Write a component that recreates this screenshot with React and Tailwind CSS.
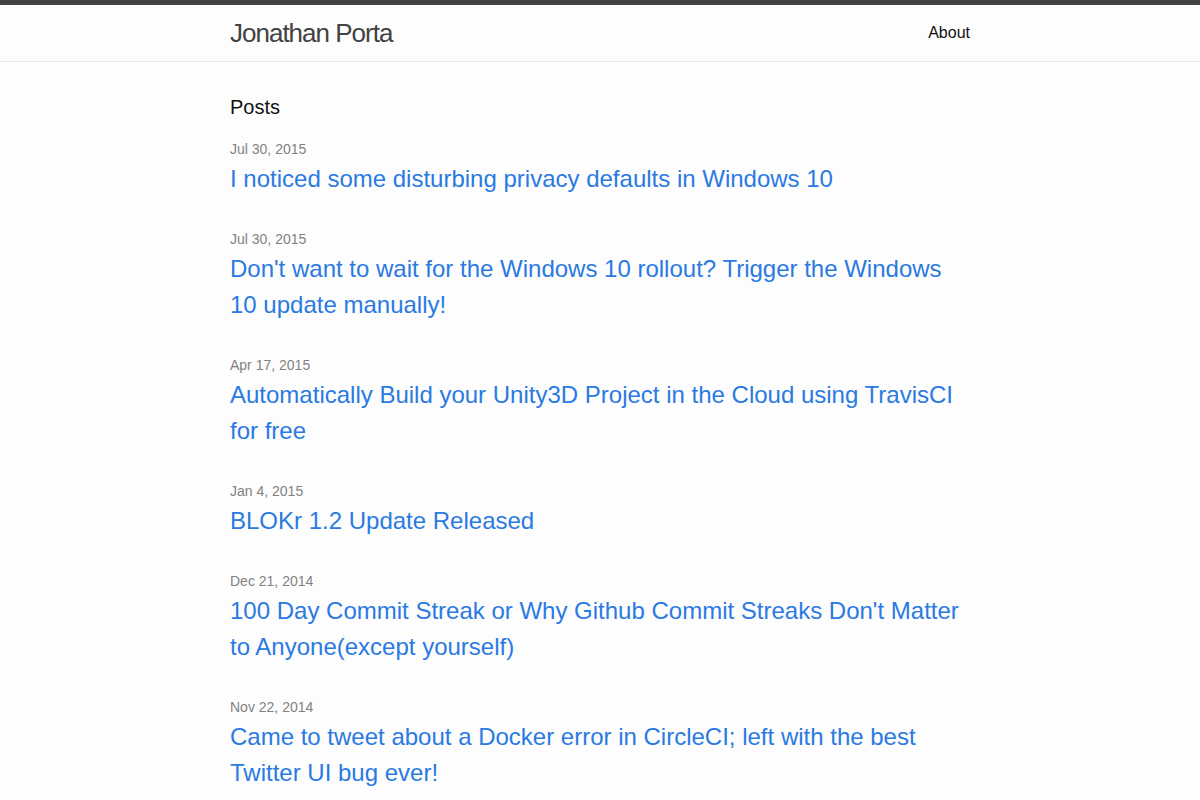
const posts = [
  { date: 'Jul 30, 2015', title: 'I noticed some disturbing privacy defaults in Windows 10' },
  { date: 'Jul 30, 2015', title: "Don't want to wait for the Windows 10 rollout? Trigger the Windows 10 update manually!" },
  { date: 'Apr 17, 2015', title: 'Automatically Build your Unity3D Project in the Cloud using TravisCI for free' },
  { date: 'Jan 4, 2015', title: 'BLOKr 1.2 Update Released' },
  { date: 'Dec 21, 2014', title: "100 Day Commit Streak or Why Github Commit Streaks Don't Matter to Anyone(except yourself)" },
  { date: 'Nov 22, 2014', title: 'Came to tweet about a Docker error in CircleCI; left with the best Twitter UI bug ever!' },
];

export default function App() {
  return (
    <div className="min-h-screen bg-[#fdfdfd] text-[#111] text-[16px] leading-6 font-['Liberation_Sans',Arial,sans-serif]">
      {/* Header */}
      <header className="border-t-[5px] border-t-[#424242] border-b border-b-[#e8e8e8]">
        <div className="mx-auto max-w-[740px] flex justify-between items-center h-[56px]">
          <a href="#" className="text-[26px] leading-[56px] tracking-[-1px] text-[#424242]">
            Jonathan Porta
          </a>
          <nav>
            <a href="#" className="text-[#111] leading-[56px]">About</a>
          </nav>
        </div>
      </header>

      {/* Posts */}
      <main className="py-[30px]">
        <div className="mx-auto max-w-[740px]">
          <h1 className="text-[20px] leading-[30px] mb-[15px]">Posts</h1>
          <ul>
            {posts.map((p, i) => (
              <li key={i} className="mb-[30px]">
                <span className="text-[14px] text-[#828282]">{p.date}</span>
                <h2 className="text-[24px] leading-[36px]">
                  <a href="#" className="block text-[#2a7ae2]">{p.title}</a>
                </h2>
              </li>
            ))}
          </ul>
        </div>
      </main>
    </div>
  );
}
